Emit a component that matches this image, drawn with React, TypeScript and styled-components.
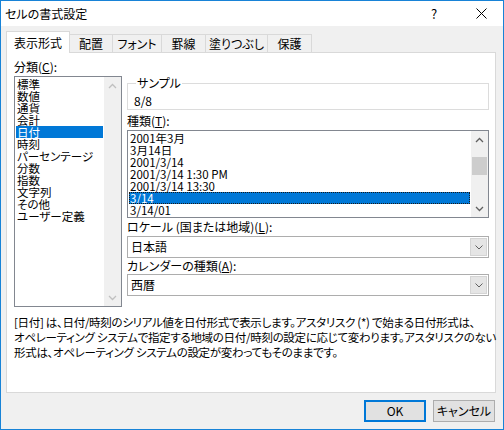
import React from 'react'
import styled, { createGlobalStyle } from 'styled-components'

const uiFont = `"Noto Sans CJK JP", "Noto Sans", sans-serif`

const GlobalStyle = createGlobalStyle`
  html, body {
    margin: 0;
    padding: 0;
    background: #fff;
  }
  body {
    font-family: ${uiFont};
    font-size: 12px;
    color: #000;
    font-feature-settings: "palt" 1;
  }
  * {
    box-sizing: border-box;
  }
`

const Window = styled.div`
  width: 504px;
  height: 430px;
  border: 1px solid #1883d7;
  background: #f0f0f0;
  display: flex;
  flex-direction: column;
`
const TitleBar = styled.div`
  height: 25px;
  background: #fff;
  display: flex;
  align-items: center;
  padding-left: 4px;
`
const Title = styled.div`
  flex: 1;
  line-height: 14px;
`
const CaptionButton = styled.div<{ $w: number }>`
  width: ${p => p.$w}px;
  height: 25px;
  display: flex;
  align-items: center;
  justify-content: center;
  font-size: 13px;
`
const Body = styled.div`
  flex: 1;
  display: flex;
  flex-direction: column;
  padding: 5px 7px 7px 5px;
`
const TabStrip = styled.div`
  display: flex;
  align-items: flex-end;
  height: 22px;
  margin-bottom: -1px;
  position: relative;
  z-index: 1;
`
const Tab = styled.div<{ $active?: boolean; $w: number }>`
  width: ${p => p.$w}px;
  height: ${p => (p.$active ? 22 : 18)}px;
  margin-bottom: ${p => (p.$active ? 0 : 1)}px;
  background: ${p => (p.$active ? '#fff' : '#f0f0f0')};
  border: 1px solid #d9d9d9;
  border-bottom: none;
  border-left: ${p => (p.$active ? '1px solid #d9d9d9' : 'none')};
  display: flex;
  align-items: center;
  justify-content: center;
  line-height: 14px;
  white-space: nowrap;
`
const Panel = styled.div`
  height: 341px;
  background: #fff;
  border: 1px solid #d9d9d9;
  padding: 6px 5px 0 7px;
  display: flex;
  flex-direction: column;
`
const TopRow = styled.div`
  display: flex;
  align-items: flex-start;
`
const LeftCol = styled.div`
  width: 108px;
  display: flex;
  flex-direction: column;
`
const RightCol = styled.div`
  width: 362px;
  margin-left: 5px;
  padding-top: 17px;
  display: flex;
  flex-direction: column;
`
const FieldLabel = styled.div<{ $mt?: number }>`
  line-height: 16px;
  height: 16px;
  margin-top: ${p => p.$mt ?? 0}px;
  white-space: nowrap;
  & u {
    text-decoration: underline;
    text-underline-offset: 1px;
  }
`
const GroupBox = styled.fieldset`
  margin: 0;
  padding: 4px 6px 1px;
  border: 1px solid #dcdcdc;
  & > legend {
    margin-left: 2px;
    padding: 0 1px;
    line-height: 14px;
  }
`
const SampleValue = styled.div`
  line-height: 14px;
`
const ListBox = styled.div<{ $h: number; $mt?: number }>`
  height: ${p => p.$h}px;
  margin-top: ${p => p.$mt ?? 0}px;
  border: 1px solid #828790;
  display: flex;
  background: #fff;
`
const ListItems = styled.div`
  flex: 1;
  padding: 1px 1px;
`
const ListItem = styled.div<{ $selected?: boolean; $focused?: boolean }>`
  height: 12px;
  line-height: 12px;
  font-size: 11.5px;
  padding-left: 1px;
  white-space: nowrap;
  background: ${p => (p.$selected ? '#0078d7' : 'transparent')};
  color: ${p => (p.$selected ? '#fff' : '#000')};
  outline: ${p => (p.$focused ? '1px dotted #1a1a1a' : 'none')};
  outline-offset: -1px;
`
const ScrollBar = styled.div`
  width: 17px;
  background: #f0f0f0;
  display: flex;
  flex-direction: column;
`
const ScrollArrow = styled.div`
  height: 17px;
  display: flex;
  align-items: center;
  justify-content: center;
`
const ScrollTrack = styled.div`
  flex: 1;
  display: flex;
  flex-direction: column;
  align-items: center;
`
const ScrollThumb = styled.div<{ $top: number; $h: number }>`
  width: 15px;
  margin-top: ${p => p.$top}px;
  height: ${p => p.$h}px;
  background: #cdcdcd;
`
const ComboBox = styled.div<{ $mt?: number }>`
  height: 22px;
  margin-top: ${p => p.$mt ?? 0}px;
  border: 1px solid #adadad;
  background: #fff;
  display: flex;
`
const ComboText = styled.div`
  flex: 1;
  padding-left: 3px;
  line-height: 20px;
`
const DropButton = styled.div`
  width: 17px;
  margin: 1px;
  background: #e5e5e5;
  border: 1px solid #d4d4d4;
  display: flex;
  align-items: center;
  justify-content: center;
`
const Description = styled.div`
  margin-top: 8px;
  font-size: 11.5px;
  line-height: 15px;
  letter-spacing: -0.3px;
  white-space: nowrap;
`
const Footer = styled.div`
  display: flex;
  justify-content: flex-end;
  gap: 7px;
  padding: 7px 1px 0 0;
`
const DialogButton = styled.div<{ $default?: boolean }>`
  width: 62px;
  height: 22px;
  background: #e1e1e1;
  border: 1px solid ${p => (p.$default ? '#0078d7' : '#adadad')};
  box-shadow: ${p => (p.$default ? 'inset 0 0 0 1px #0078d7' : 'none')};
  display: flex;
  align-items: center;
  justify-content: center;
  line-height: 14px;
`

const Chevron = ({ dir, color }: { dir: 'up' | 'down'; color: string }) => (
  <svg width="9" height="6" viewBox="0 0 9 6">
    <path
      d={dir === 'up' ? 'M1 5 L4.5 1.5 L8 5' : 'M1 1 L4.5 4.5 L8 1'}
      fill="none"
      stroke={color}
      strokeWidth="1.3"
    />
  </svg>
)

const ComboChevron = () => (
  <svg width="8" height="5" viewBox="0 0 8 5">
    <path d="M0.5 0.5 L4 4 L7.5 0.5" fill="none" stroke="#606060" strokeWidth="1" />
  </svg>
)

const CloseIcon = () => (
  <svg width="11" height="11" viewBox="0 0 11 11">
    <path d="M0.5 0.5 L10.5 10.5 M10.5 0.5 L0.5 10.5" stroke="#000" strokeWidth="1" />
  </svg>
)

const categories = [
  '標準', '数値', '通貨', '会計', '日付', '時刻', 'パーセンテージ',
  '分数', '指数', '文字列', 'その他', 'ユーザー定義',
]

const dateTypes = [
  '2001年3月', '3月14日', '2001/3/14', '2001/3/14 1:30 PM',
  '2001/3/14 13:30', '3/14', '3/14/01',
]

const tabs = [
  { label: '表示形式', w: 64, active: true },
  { label: '配置', w: 43 },
  { label: 'フォント', w: 49 },
  { label: '罫線', w: 44 },
  { label: '塗りつぶし', w: 62 },
  { label: '保護', w: 44 },
]

const App = () => {
  return (
    <>
      <GlobalStyle />
      <Window>
        <TitleBar>
          <Title>セルの書式設定</Title>
          <CaptionButton $w={50}>?</CaptionButton>
          <CaptionButton $w={44}><CloseIcon /></CaptionButton>
        </TitleBar>
        <Body>
          <TabStrip>
            {tabs.map(t => (
              <Tab key={t.label} $w={t.w} $active={t.active}>{t.label}</Tab>
            ))}
          </TabStrip>
          <Panel>
            <TopRow>
              <LeftCol>
                <FieldLabel>分類(<u>C</u>):</FieldLabel>
                <ListBox $h={231} $mt={1}>
                  <ListItems>
                    {categories.map(c => (
                      <ListItem key={c} $selected={c === '日付'}>{c}</ListItem>
                    ))}
                  </ListItems>
                  <ScrollBar>
                    <ScrollArrow><Chevron dir="up" color="#c0c0c0" /></ScrollArrow>
                    <ScrollTrack />
                    <ScrollArrow><Chevron dir="down" color="#c0c0c0" /></ScrollArrow>
                  </ScrollBar>
                </ListBox>
              </LeftCol>
              <RightCol>
                <GroupBox>
                  <legend>サンプル</legend>
                  <SampleValue>8/8</SampleValue>
                </GroupBox>
                <FieldLabel $mt={3}>種類(<u>T</u>):</FieldLabel>
                <ListBox $h={88} $mt={1}>
                  <ListItems>
                    {dateTypes.map(d => (
                      <ListItem key={d} $selected={d === '3/14'} $focused={d === '3/14'}>{d}</ListItem>
                    ))}
                  </ListItems>
                  <ScrollBar>
                    <ScrollArrow><Chevron dir="up" color="#606060" /></ScrollArrow>
                    <ScrollTrack>
                      <ScrollThumb $top={9} $h={18} />
                    </ScrollTrack>
                    <ScrollArrow><Chevron dir="down" color="#606060" /></ScrollArrow>
                  </ScrollBar>
                </ListBox>
                <FieldLabel $mt={1}>ロケール (国または地域)(<u>L</u>):</FieldLabel>
                <ComboBox $mt={1}>
                  <ComboText>日本語</ComboText>
                  <DropButton><ComboChevron /></DropButton>
                </ComboBox>
                <FieldLabel>カレンダーの種類(<u>A</u>):</FieldLabel>
                <ComboBox>
                  <ComboText>西暦</ComboText>
                  <DropButton><ComboChevron /></DropButton>
                </ComboBox>
              </RightCol>
            </TopRow>
            <Description>
              [日付] は、日付/時刻のシリアル値を日付形式で表示します。アスタリスク (*) で始まる日付形式は、<br />
              オペレーティング システムで指定する地域の日付/時刻の設定に応じて変わります。アスタリスクのない<br />
              形式は、オペレーティング システムの設定が変わってもそのままです。
            </Description>
          </Panel>
          <Footer>
            <DialogButton $default>OK</DialogButton>
            <DialogButton>キャンセル</DialogButton>
          </Footer>
        </Body>
      </Window>
    </>
  )
}

export default App
